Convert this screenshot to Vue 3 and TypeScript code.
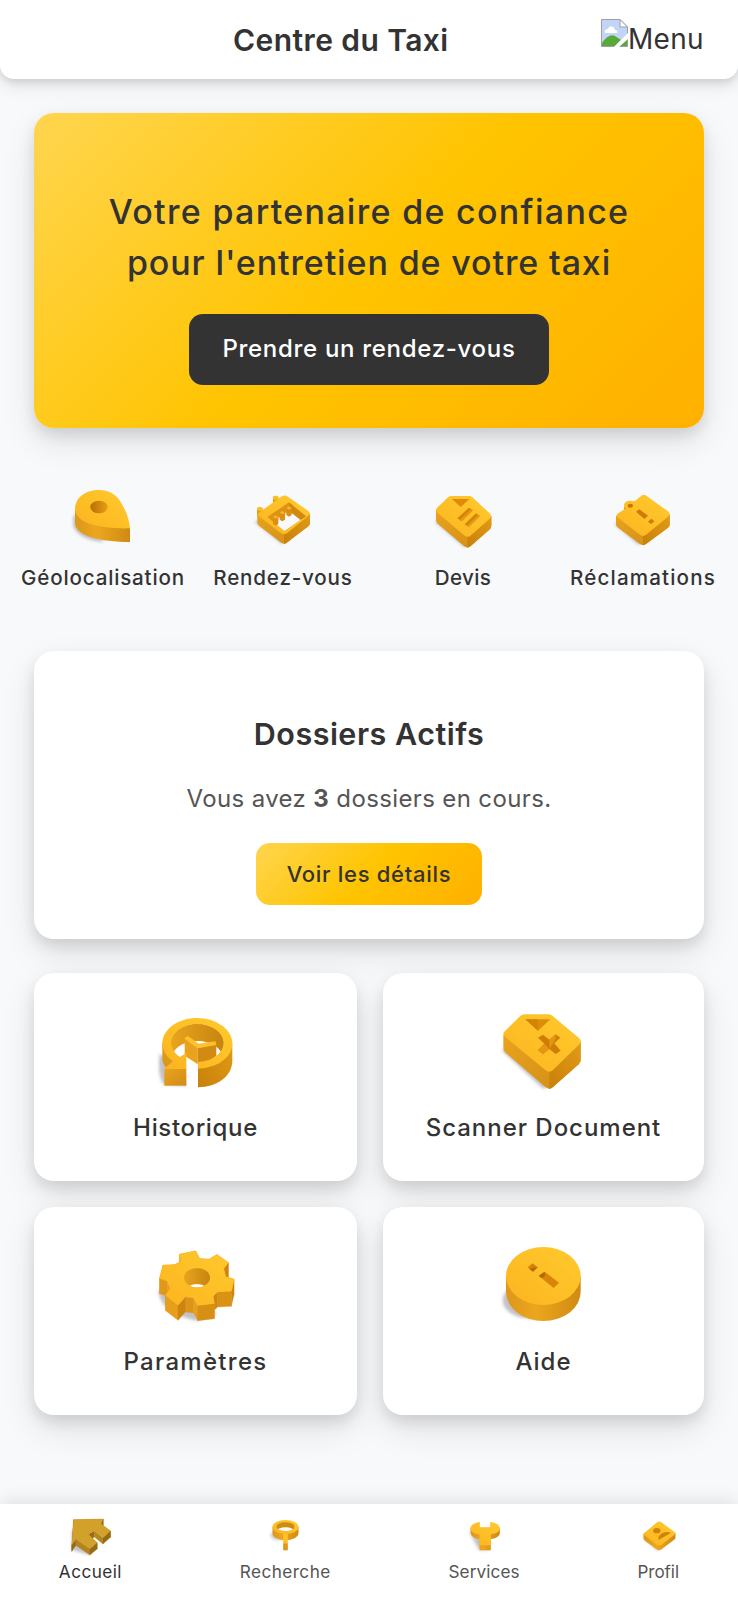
<script setup lang="ts">
type Pt = [number, number]
interface Face { d: string; fill: string; z: number }

const parse = (s: string): Pt[] => s.split(' ').map(p => p.split(',').map(Number) as Pt)

// Builds the side faces of a prism extruded downwards by `h`, back to front.
function sides(points: string, h: number, light = [232, 160, 28], dark = [205, 133, 15]): Face[] {
  const pts = parse(points)
  return pts.map((a, i) => {
    const b = pts[(i + 1) % pts.length]
    const dx = b[0] - a[0]
    const dy = b[1] - a[1]
    const slope = dy / (Math.hypot(dx, dy) || 1) * (dx < 0 ? 1 : -1)
    const t = Math.min(1, Math.max(0, 0.5 - slope * 0.7))
    const c = light.map((v, k) => Math.round(v + (dark[k] - v) * (1 - t)))
    return {
      d: `M${a[0]},${a[1]}L${b[0]},${b[1]}L${b[0]},${b[1] + h}L${a[0]},${a[1] + h}Z`,
      fill: `rgb(${c.join(',')})`,
      z: (a[1] + b[1]) / 2,
    }
  }).sort((p, q) => p.z - q.z)
}

const gear = '118,55 166,45 178,68 206,70 230,56 264,80 250,98 256,122 281,130 273,165 232,167 218,180 222,202 172,208 160,185 135,182 113,207 76,178 90,157 82,135 58,127 68,88 104,86 122,76'
const house = '99,88 188,86 182,101 210,122 187,142 162,121 144,132 170,157 148,175 106,146 94,164'
const gearSides = sides(gear, 46)
const houseSides = sides(house, 19, [184, 134, 30], [150, 104, 16])

const quick = [
  { id: 'geo', label: 'Géolocalisation', box: '39 30 180 180' },
  { id: 'cal', label: 'Rendez-vous', box: '579 30 180 180' },
  { id: 'doc', label: 'Devis', box: '39 30 180 180' },
  { id: 'tag', label: 'Réclamations', box: '579 30 180 180' },
]
const tiles = [
  { id: 'history', label: 'Historique', box: '38 23 258 258' },
  { id: 'scan', label: 'Scanner Document', box: '33 23 258 258' },
  { id: 'gear', label: 'Paramètres', box: '38 18 258 258' },
  { id: 'info', label: 'Aide', box: '33 18 258 258' },
]
const tabs = [
  { id: 'home', label: 'Accueil', box: '88.5 80 123 123' },
  { id: 'search', label: 'Recherche', box: '673.5 80 123 123' },
  { id: 'wrench', label: 'Services', box: '100.5 80 123 123' },
  { id: 'user', label: 'Profil', box: '622.5 80 123 123' },
]
</script>

<template>
  <div class="page">
    <svg class="defs" width="0" height="0">
      <defs>
        <linearGradient id="top" x1="0" y1="1" x2="1" y2="0"><stop offset="0" stop-color="#fcb41f" /><stop offset="1" stop-color="#ffca2e" /></linearGradient>
        <linearGradient id="side" x1="0" y1="0" x2="1" y2="0"><stop offset="0" stop-color="#dd971b" /><stop offset=".4" stop-color="#eca61e" /><stop offset="1" stop-color="#d08a12" /></linearGradient>
        <linearGradient id="lside" x1="0" y1="0" x2="1" y2="1"><stop offset="0" stop-color="#e9a31e" /><stop offset="1" stop-color="#d18d16" /></linearGradient>
        <linearGradient id="rside" x1="0" y1="1" x2="1" y2="0"><stop offset="0" stop-color="#c88109" /><stop offset="1" stop-color="#e29b15" /></linearGradient>
        <linearGradient id="hole" x1="0" y1="0" x2="1" y2="0"><stop offset="0" stop-color="#b96f02" /><stop offset="1" stop-color="#e99e14" /></linearGradient>
        <linearGradient id="wall" x1="0" y1="0" x2="1" y2="0"><stop offset="0" stop-color="#e9a41e" /><stop offset="1" stop-color="#c7840f" /></linearGradient>
        <filter id="soft" x="-30%" y="-30%" width="160%" height="160%"><feGaussianBlur stdDeviation="5" /></filter>
        <clipPath id="ringClip"><ellipse cx="171" cy="128" rx="79" ry="57" /></clipPath>
        <clipPath id="gearClip"><ellipse cx="170" cy="125" rx="39" ry="29" /></clipPath>
        <clipPath id="lensClip"><ellipse cx="735" cy="109" rx="27" ry="13" /></clipPath>
        <clipPath id="calClip"><path d="M622,126L687,82L738,124L673,168Z" /></clipPath>
      </defs>
    </svg>

    <header class="bar">
      <h1>Centre du Taxi</h1>
      <div class="menu">
        <svg class="broken" viewBox="0 0 27 28">
          <path d="M.5.5H19L26.500 8V27.500H.5Z" fill="#c3d5f6" stroke="#9aa0a8" />
          <path d="M4 14q-1-4 3-4q1-4 5-2q2 1 2 3q3 0 2 3Z" fill="#fff" />
          <path d="M1 27V24Q8 14 14 17L20 21L14 27Z" fill="#57a938" />
          <path d="M18 27L26 17V27Z" fill="#57a938" /><path d="M13 28L27 14V20L18 28Z" fill="#fff" />
          <path d="M19 .5V8H26.500Z" fill="#fff" stroke="#9aa0a8" />
        </svg><span>Menu</span>
      </div>
    </header>

    <main>
      <section class="hero">
        <h2><span class="l1">Votre partenaire de confiance</span><br><span class="l2">pour l'entretien de votre taxi</span></h2>
        <button class="dark">Prendre un rendez-vous</button>
      </section>

      <nav class="quick">
        <a v-for="q in quick" :key="q.id" :class="q.id">
          <svg :viewBox="q.box">
            <g v-if="q.id === 'geo'">
              <path d="M40,120V155Q60,195 130,200L110,150Z" class="shade" />
              <path d="M45,100V144C48,184 120,200 210,201V158Z" fill="url(#side)" />
              <path d="M45,100C46,68 76,45 118,45C147,45 166,58 180,78C196,102 207,130 210,160C120,162 45,146 45,100Z" fill="url(#top)" />
              <ellipse cx="117" cy="96" rx="26" ry="19" fill="url(#hole)" />
            </g>
            <g v-else-if="q.id === 'cal'">
              <path d="M584,140L664,206L690,190L610,130Z" class="shade" />
              <path d="M591,101Q599,91 608,101V125H591ZM639,67Q646,57 655,67V90H639Z" fill="#e39a16" />
              <ellipse cx="599.500" cy="102" rx="8.500" ry="6" fill="#fdbd25" /><ellipse cx="647" cy="68" rx="8.500" ry="6" fill="#fdbd25" />
              <path d="M592,116V143Q592,148 597,152L664,203Q672,208 680,203L745,154Q750,150 750,145V116Z" fill="url(#lside)" />
              <path d="M672,178V207Q677,206 680,203L745,154Q750,150 750,145V116Z" fill="url(#rside)" />
              <path d="M597,113L662,66Q672,57 684,65L745,108Q754,115 745,122L682,174Q672,181 662,174L597,124Q588,118 597,113Z" fill="url(#top)" />
              <path d="M622,126L687,82L738,124L673,168Z" fill="#dc9317" />
              <g clip-path="url(#calClip)">
                <path d="M687,82L738,124V150L687,108Z" fill="#d18a10" />
                <path d="M622,150L687,108L738,148L673,190Z" fill="#f8f9fb" />
              </g>
              <g v-for="(p, i) in [[647, 126], [667, 113], [687, 99]]" :key="i">
                <path :d="`M${p[0] - 8},${p[1]}v21l8,5l8,-5v-21z`" fill="#db9014" />
                <path :d="`M${p[0] - 8},${p[1]}l8,-5l8,5l-8,5z`" fill="#fab61f" />
              </g>
            </g>
            <g v-else-if="q.id === 'doc'">
              <path d="M44,140L132,216L165,200L70,130Z" class="shade" />
              <path d="M48,104V136Q49,142 54,147L132,213Q142,222 153,212L208,164Q214,158 214,152V125Z" fill="url(#lside)" />
              <path d="M142,186V218Q148,217 153,212L208,164Q214,158 214,152V122Z" fill="url(#rside)" />
              <path d="M53,97L84,67Q89,63 95,63H148Q153,63 157,67L209,115Q217,123 209,131L153,181Q142,190 132,181L53,114Q44,106 53,97Z" fill="url(#top)" />
              <path d="M96,72H148L122,96Z" fill="#dd8b0a" />
              <path d="M112,130L147,98L159,106L125,139ZM134,148L168,115L180,123L146,156Z" fill="#d5830a" />
              <path d="M119,135L154,103L159,106L125,139ZM141,152L175,120L180,123L146,156Z" fill="#e89a14" />
            </g>
            <g v-else>
              <path d="M584,148L655,209L690,190L610,135Z" class="shade" />
              <path d="M588,122V150Q589,154 595,159L660,207Q669,213 679,206L743,159Q749,154 749,149V118Z" fill="url(#lside)" />
              <path d="M669,183V211Q675,210 679,206L743,159Q749,154 749,149V118Z" fill="url(#rside)" />
              <path d="M612,95V110H630V92Z" fill="#e39a16" />
              <path d="M593,116L617,100C606,90 615,77 630,77Q638,77 644,79L662,64Q669,56 679,62L744,109Q753,116 744,125L680,178Q669,187 658,178L594,128Q586,122 593,116Z" fill="url(#top)" />
              <ellipse cx="631" cy="92" rx="8" ry="6" fill="#c97408" />
              <path d="M648,110L658,103L684,122L673,132ZM684,140L694,131L703,139L693,147Z" fill="#d07a08" />
            </g>
          </svg>
          <span>{{ q.label }}</span>
        </a>
      </nav>

      <section class="card files">
        <h3>Dossiers Actifs</h3>
        <p>Vous avez <strong>3</strong> dossiers en cours.</p>
        <button class="gold">Voir les détails</button>
      </section>

      <section class="tiles">
        <a v-for="t in tiles" :key="t.id" class="card tile" :class="t.id">
          <svg :viewBox="t.box">
            <g v-if="t.id === 'history'">
              <path d="M58,160Q50,230 72,254L160,258L100,190Z" class="shade" />
              <path d="M66,128V178Q68,192 78,204L105,190L100,150Z" fill="#db981b" />
              <path d="M276,129V180C276,228 232,260 173,261V200Z" fill="url(#rside)" />
              <ellipse cx="171" cy="128" rx="80" ry="58" fill="url(#wall)" />
              <g clip-path="url(#ringClip)"><ellipse cx="171" cy="178" rx="79" ry="56" fill="#fff" /></g>
              <path d="M138,160H173V262H138Z" fill="#fff" />
              <path d="M133,115L172,142V192L133,166Z" fill="#e9a21c" /><path d="M172,142L228,132V166L205,184L172,190Z" fill="#d18b13" />
              <path d="M131,114L143,107L175,130L225,123L228,134L173,144Z" fill="#ffc12b" />
              <path d="M173,205A105,76 0 1 0 97,183L72,206H138V158L118,170.300A79,57 0 1 1 173,185Z" fill="url(#top)" />
              <path d="M72,206H138V256H72Z" fill="url(#lside)" />
            </g>
            <g v-else-if="t.id === 'scan'">
              <path d="M34,150L160,266L200,240L70,140Z" class="shade" />
              <path d="M40,104V146Q41,152 48,158L166,260Q178,270 189,260L266,192Q272,186 272,178V125Z" fill="url(#lside)" />
              <path d="M178,212V266Q184,265 189,260L266,192Q272,186 272,178V124Z" fill="url(#rside)" />
              <path d="M46,91L90,48Q96,42 104,42H177Q183,42 188,47L266,112Q278,122 268,132L189,209Q178,219 166,209L46,110Q34,100 46,91Z" fill="url(#top)" />
              <path d="M106,57H181L144,91Z" fill="#de8d08" /><path d="M144,91L106,57H143Z" fill="#d38306" />
              <path d="M144,112L159,103L178,118L197,102L211,112L193,129L212,151L197,161L178,146L159,161L144,150L163,130Z" fill="#cf7d05" />
              <path d="M178,118L197,102V115L179,146V160ZM163,130L144,150L159,161L178,146Z" fill="#e59613" />
            </g>
            <g v-else-if="t.id === 'gear'">
              <path d="M54,165Q60,233 170,254L230,235L110,140Z" class="shade" />
              <path v-for="(f, i) in gearSides" :key="i" :d="f.d" :fill="f.fill" :stroke="f.fill" stroke-width="1" />
              <polygon :points="gear" fill="url(#top)" stroke="#fdbc25" stroke-width="2" stroke-linejoin="round" />
              <ellipse cx="170" cy="125" rx="39" ry="29" fill="url(#wall)" />
              <g clip-path="url(#gearClip)"><ellipse cx="170" cy="173" rx="39" ry="29" fill="#fff" /></g>
            </g>
            <g v-else>
              <ellipse cx="122" cy="193" rx="84" ry="55" class="shade" />
              <path d="M48,120V167A112,88 0 0 0 272,167V120Z" fill="url(#side)" />
              <ellipse cx="160" cy="120" rx="112" ry="87" fill="url(#top)" />
              <path d="M113,94L128,82L143,94L129,107Z" fill="#d58009" /><path d="M128,95L143,94L129,107L118,99Z" fill="#b96903" />
              <path d="M146,119L164,107L207,140L191,156Z" fill="#d98508" /><path d="M146,119L164,107L165,120L155,127Z" fill="#b66702" />
            </g>
          </svg>
          <span>{{ t.label }}</span>
        </a>
      </section>
    </main>

    <footer class="tabs">
      <a v-for="t in tabs" :key="t.id" :class="t.id">
        <svg :viewBox="t.box">
          <g v-if="t.id === 'home'">
            <path d="M94,120V178L146,194L160,170Z" class="shade" />
            <path v-for="(f, i) in houseSides" :key="i" :d="f.d" :fill="f.fill" :stroke="f.fill" stroke-width="1" />
            <polygon :points="house" fill="#d2a12b" />
          </g>
          <g v-else-if="t.id === 'search'">
            <ellipse cx="713" cy="135" rx="22" ry="13" class="shade" />
            <path d="M696,109V128A39,22 0 0 0 774,128V109Z" fill="url(#side)" />
            <ellipse cx="735" cy="110" rx="39" ry="21" fill="url(#top)" />
            <ellipse cx="735" cy="109" rx="27" ry="13" fill="#cf8c14" />
            <g clip-path="url(#lensClip)"><ellipse cx="735" cy="124" rx="27" ry="13" fill="#fff" /></g>
            <path d="M728,131H742V160H728Z" fill="#ffc02a" /><path d="M728,159H742V180H728Z" fill="#de981a" />
          </g>
          <g v-else-if="t.id === 'wrench'">
            <path d="M116,125L146,180H176L150,130Z" class="shade" />
            <path d="M120,112V127C121,138 135,146 147,146V180H181V146C196,145 208,138 208,128V112Z" fill="url(#side)" />
            <path d="M148,95V111H179V95C198,97 208,105 208,114C208,124 196,131 181,132V165H147V132C131,131 120,124 120,114C120,104 132,97 148,95Z" fill="url(#top)" />
          </g>
          <g v-else>
            <path d="M638,140L680,180L700,168L650,130Z" class="shade" />
            <path d="M639,130V145Q640,149 644,152L680,178Q686,182 693,177L730,149Q735,146 735,142V127Z" fill="url(#side)" />
            <path d="M642,127L680,96Q686,91 693,96L731,124Q738,129 731,134L693,163Q686,168 679,163L642,135Q636,131 642,127Z" fill="url(#top)" />
            <ellipse cx="679" cy="121" rx="11" ry="8" fill="#d08209" />
            <path d="M684,149Q681,137 695,129Q709,122 721,128Z" fill="#d08209" />
          </g>
        </svg>
        <span>{{ t.label }}</span>
      </a>
    </footer>
  </div>
</template>

<style>
body { margin: 0; background: #f8f9fb; }
</style>

<style scoped>
.page { height: 1600px; display: flex; flex-direction: column; background: #f8f9fb; color: #333; font-family: Inter, "Open Sans", sans-serif; overflow: hidden; }
.defs { position: absolute; }
h1, h2, h3, p { margin: 0; }
button { border: 0; font: inherit; display: block; margin: 0 auto; padding: 0; color: inherit; }
span { white-space: nowrap; }
svg { display: block; overflow: visible; }
.shade { fill: rgba(60, 66, 80, .32); filter: url(#soft); }
.bar { height: 79px; flex: none; background: #fff; border-radius: 0 0 14px 14px; box-shadow: 0 7px 17px rgba(0, 0, 0, .1), 0 3px 7px rgba(0, 0, 0, .1); display: flex; align-items: center; justify-content: space-between; padding: 0 34px 0 233px; box-sizing: border-box; }
.bar h1 { font-size: 30px; font-weight: 600; line-height: 46px; letter-spacing: .42px; }
.menu { display: flex; align-items: flex-start; font-size: 28px; line-height: 43px; letter-spacing: .35px; }
.broken { width: 27px; height: 28px; margin-top: 1px; }
main { flex: 1; min-height: 0; }
.hero { box-sizing: border-box; height: 314.5px; margin: 34px 34px 0; padding-top: 72.5px; border-radius: 20px; text-align: center; background: linear-gradient(135deg, #ffd54f, #ffc400 50%, #ffb000); box-shadow: 0 14px 34px rgba(0, 0, 0, .1), 0 7px 14px rgba(0, 0, 0, .1); }
.hero h2 { font-size: 34px; font-weight: 500; line-height: 51.4px; }
.l1 { letter-spacing: 1.3px; }
.l2 { letter-spacing: .87px; }
.dark { width: 360px; height: 71px; margin-top: 26px; padding-bottom: 3px; border-radius: 14px; background: #333; color: #fff; font-size: 24px; font-weight: 500; letter-spacing: .7px; }
.quick { display: grid; grid-template-columns: repeat(4, 180px); margin: 57.500px 0 0 13px; }
.quick a { display: flex; flex-direction: column; align-items: center; }
.quick svg { width: 60px; height: 60px; }
.quick span { font-size: 20.600px; font-weight: 500; line-height: 30px; margin-top: 18px; letter-spacing: .82px; }
.quick .doc span { letter-spacing: .35px; }
.quick .tag span { letter-spacing: 1.150px; }
.card { background: #fff; border-radius: 20px; box-shadow: 0 14px 34px rgba(0, 0, 0, .1), 0 7px 14px rgba(0, 0, 0, .1); box-sizing: border-box; }
.files { height: 287.800px; margin: 58px 34px 34px; padding-top: 60px; text-align: center; }
.files h3 { font-size: 30.500px; font-weight: 600; line-height: 46px; letter-spacing: .5px; }
.files p { font-size: 24px; line-height: 36px; color: #555; margin-top: 24px; letter-spacing: .37px; }
.gold { width: 226px; height: 62px; margin-top: 26px; padding-bottom: 1px; border-radius: 14px; background: linear-gradient(135deg, #ffd54f, #ffc400 50%, #ffb000); font-size: 22px; font-weight: 500; letter-spacing: .7px; }
.tiles { display: grid; grid-template-columns: 323px 321px; grid-auto-rows: 208px; gap: 26.300px 26px; margin: 0 34px; }
.tile { display: flex; flex-direction: column; align-items: center; padding-top: 35px; }
.tile svg { width: 86px; height: 86px; }
.tile span { font-size: 24px; font-weight: 500; line-height: 36px; margin-top: 16px; letter-spacing: .65px; }
.scan span { letter-spacing: .97px; }
.gear span { letter-spacing: 1.300px; }
.info span { letter-spacing: .95px; }
.tabs { position: relative; height: 96.300px; flex: none; background: #fff; box-shadow: 0 -3px 17px rgba(0, 0, 0, .1); display: flex; justify-content: space-around; color: #555; }
.tabs a { display: flex; flex-direction: column; align-items: center; padding-top: 13px; }
.tabs svg { width: 41px; height: 41px; }
.tabs span { font-size: 17.200px; line-height: 26px; margin-top: 1px; letter-spacing: .45px; }
.tabs .wrench span { letter-spacing: .1px; }
.tabs .user span { letter-spacing: 0; font-size: 17px; }
.tabs .home { color: #333; }
</style>
